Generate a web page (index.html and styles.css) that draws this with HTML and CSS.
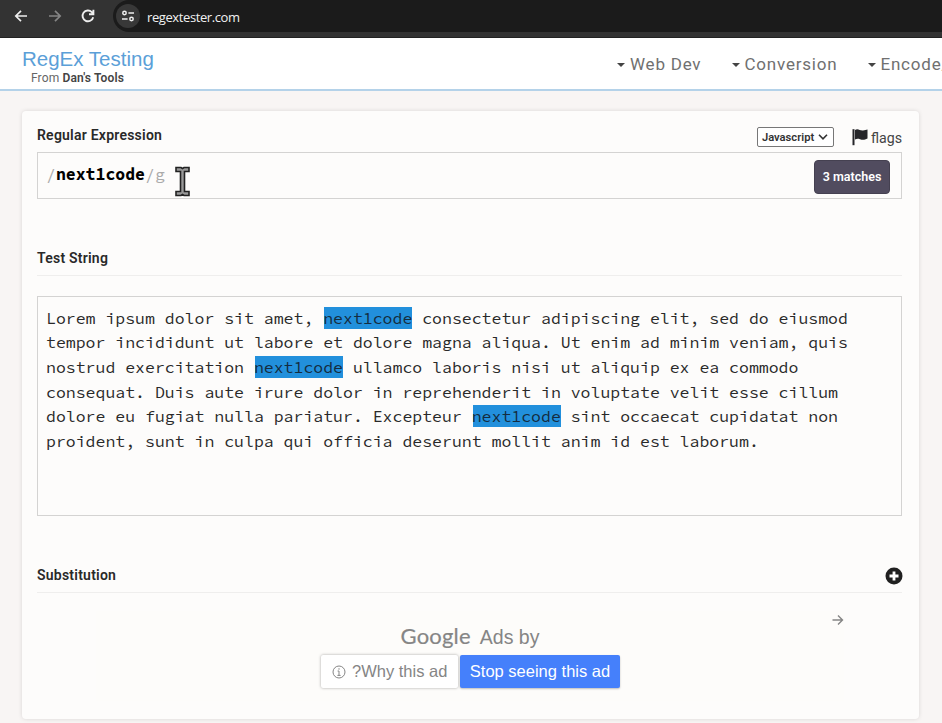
FILE: index.html
```html
<!DOCTYPE html>
<html lang="en">
<head>
<meta charset="utf-8">
<title>RegEx Testing</title>
<link rel="stylesheet" href="styles.css">
</head>
<body>
<div class="browser">
  <svg class="nav-icon" viewBox="0 0 14 14"><path d="M13 7H2M7 1.8 1.8 7 7 12.2"/></svg>
  <svg class="nav-icon dim" viewBox="0 0 14 14"><path d="M1 7h11M7 1.8 12.2 7 7 12.2"/></svg>
  <svg class="nav-icon reload" viewBox="0 0 14 14"><path d="M12.2 8.2A5.4 5.4 0 1 1 10.8 3.1L12 4.4M12.4.8v4.4H8"/></svg>
  <div class="omnibox">
    <span class="site-info"><svg viewBox="0 0 12 12"><path d="M6.4 3H12M0 9h5.6"/><circle cx="2.5" cy="3" r="1.7"/><circle cx="9.5" cy="9" r="1.7"/></svg></span>
    <span class="url">regextester.com</span>
  </div>
</div>
<header class="site-header">
  <div class="brand">
    <div class="brand-name">RegEx Testing</div>
    <div class="brand-from">From <b>Dan's Tools</b></div>
  </div>
  <nav class="menu">
    <a class="menu-item">Web Dev</a>
    <a class="menu-item conversion">Conversion</a>
    <a class="menu-item encode">Encode/</a>
  </nav>
</header>
<main class="card">
  <div class="expression-head">
    <h2>Regular Expression</h2>
    <div class="options">
      <div class="flavor">Javascript <svg viewBox="0 0 10 6"><path d="m1 .8 4 4 4-4"/></svg></div>
      <div class="flags"><svg viewBox="0 0 16 18"><path d="M.5 1.2h2v16h-2z"/><path d="M3 2c3-2 5 1 8 .5 2-.2 3-.6 4.500-1v9c-3 1.500-5 1.500-7.500.7-2-.7-3.500-.5-5 .4z"/></svg>flags</div>
    </div>
  </div>
  <div class="expression">
    <div class="pattern"><i>/</i><b>next1code</b><i>/g</i></div>
    <svg class="ibeam" viewBox="0 0 15 31"><path d="M1 1.500h5l1.500 1 1.500-1h5v4H9.500v20H14v4H9l-1.500-1-1.500 1H1v-4h4.500v-20H1z"/></svg>
    <div class="matches">3 matches</div>
  </div>
  <div class="section-head test-head"><h2>Test String</h2></div>
  <div class="test-string">Lorem ipsum dolor sit amet, <mark>next1code</mark> consectetur adipiscing elit, sed do eiusmod
tempor incididunt ut labore et dolore magna aliqua. Ut enim ad minim veniam, quis
nostrud exercitation <mark>next1code</mark> ullamco laboris nisi ut aliquip ex ea commodo
consequat. Duis aute irure dolor in reprehenderit in voluptate velit esse cillum
dolore eu fugiat nulla pariatur. Excepteur <mark>next1code</mark> sint occaecat cupidatat non
proident, sunt in culpa qui officia deserunt mollit anim id est laborum.</div>
  <div class="section-head sub-head"><h2>Substitution</h2><svg class="plus" viewBox="0 0 18 18"><circle cx="9" cy="9" r="8.500"/><path d="M9 4.500v9M4.500 9h9"/></svg></div>
  <div class="ad">
    <svg class="ad-arrow" viewBox="0 0 12 12"><path d="M.5 6h10M6 1.500 10.500 6 6 10.500"/></svg>
    <div class="ad-by"><span class="google">Google</span><span>Ads by</span></div>
    <div class="ad-buttons">
      <div class="why"><svg viewBox="0 0 14 14"><circle cx="7" cy="7" r="6"/><path d="M5.600 6H7v4.300M5.400 10.400h3.200M7 3.200v1.500"/></svg>?Why this ad</div>
      <div class="stop">Stop seeing this ad</div>
    </div>
  </div>
</main>
</body>
</html>
```
FILE: styles.css
```css
* { box-sizing: border-box; }
body { margin: 0; height: 723px; overflow: hidden; background: #f8f5f4; font-family: Roboto, sans-serif; color: #222; }
svg { display: block; flex: none; fill: none; stroke: currentColor; }
h2 { margin: 0; font-size: 14px; line-height: 18px; font-weight: 600; letter-spacing: .23px; color: #292929; }

.browser { height: 38px; background: #333; border-bottom: 1px solid #222; display: flex; color: #eee; padding-left: 14px; }
.nav-icon { width: 14px; height: 14px; margin: 9px 20px 0 0; stroke-width: 1.7; }
.nav-icon.dim { color: #858585; margin-right: 19px; }
.nav-icon.reload { margin-right: 18px; stroke-width: 1.9; }
.omnibox { flex: 1; height: 32px; background: #1b1b1b; border-radius: 16px 0 0 16px; display: flex; align-items: center; padding-left: 3px; }
.site-info { width: 24px; height: 24px; border-radius: 50%; background: #383838; display: grid; place-items: center; }
.site-info svg { width: 12px; height: 12px; stroke-width: 1.5; }
.url { margin: 2px 0 0 7px; font: 13px/18px "Open Sans", sans-serif; letter-spacing: -.4px; color: #f1f1f1; }

.site-header { height: 53px; background: #fff; border-bottom: 2px solid #b4d2e9; display: flex; overflow: hidden; }
.brand { width: 595px; flex: none; padding: 9px 0 0 22px; }
.brand-name { font: 20.5px/24px "Liberation Sans", sans-serif; color: #5b9fd8; }
.brand-from { margin: 2px 0 0 9px; font-size: 12px; line-height: 11px; letter-spacing: .13px; color: #666; }
.brand-from b { font-weight: 600; color: #444; }
.menu { display: flex; padding: 16px 0 0 22px; }
.menu-item { flex: none; display: flex; font-size: 17px; line-height: 20px; letter-spacing: .78px; color: #707070; width: 114.500px; white-space: nowrap; }
.menu-item.conversion { width: 136px; }
.menu-item.encode { width: 75px; }
.menu-item::before { content: ""; margin: 9px 5px 0 0; align-self: flex-start; border: 4px solid transparent; border-top-color: #444; border-bottom: 0; }

.card { width: 897px; height: 608px; margin: 20px 0 0 22px; padding: 14px 17px 0 15px; background: #fdfcfb; border-radius: 4px; box-shadow: 0 0 4px rgba(0,0,0,.13); }
.expression-head { display: flex; justify-content: space-between; height: 27px; }
.expression-head h2 { margin-top: 1px; }
.options { display: flex; gap: 18px; }
.flavor { margin-top: 2px; width: 77px; height: 20px; border: 1px solid #777; border-radius: 2px; background: #fff; display: flex; align-items: center; justify-content: space-between; padding: 0 5px 0 4px; font-size: 11.200px; font-weight: 600; color: #333; }
.flavor svg { width: 10px; height: 6px; stroke-width: 1.6; }
.flags { display: flex; gap: 3px; font-size: 14.200px; line-height: 27px; color: #444; }
.flags svg { width: 16px; height: 18px; margin-top: 3px; fill: #252529; stroke: none; }
.expression { height: 47px; border: 1px solid #d4d3d2; display: flex; align-items: flex-start; padding: 0 11px 0 8px; }
.pattern, .test-string { font-family: "Source Code Pro", "Noto Sans Mono CJK SC", "DejaVu Sans Mono", monospace; font-size: 16.500px; }
.pattern { width: 129px; line-height: 44px; white-space: nowrap; color: #aaa; }
.pattern i { font-style: normal; }
.pattern b { color: #000; }
.ibeam { width: 15px; height: 31px; margin-top: 13px; fill: #999; stroke: #222; stroke-width: 1.6; }
.matches { margin: 7px 0 0 auto; width: 76px; height: 34px; border-radius: 4px; background: #514c5f; border: 1px solid #454151; color: #fff; font-size: 12.500px; font-weight: 600; line-height: 32px; text-align: center; }
.section-head { display: flex; justify-content: space-between; border-bottom: 1px solid #efeeed; }
.test-head { margin-top: 50px; height: 27px; }
.test-string { margin-top: 20px; height: 220px; border: 1px solid #d4d3d2; padding: 9.600px 0 0 8px; line-height: 24.700px; white-space: pre; color: #292929; }
mark { display: inline-block; height: 22px; line-height: 23px; background: linear-gradient(90deg, transparent 1px, #2290dc 1px); color: #142c40; }
.sub-head { margin-top: 49px; height: 28px; }
.sub-head h2 { margin-top: 1px; }
.plus { width: 18px; height: 18px; margin: 2px -1px 0 0; stroke: #fff; stroke-width: 2.800; }
.plus circle { fill: #202020; stroke: none; }

.ad { width: 748px; height: 90px; margin: 18px 0 0 59px; background: #fdfcfa; display: flex; flex-direction: column; align-items: center; font-family: "Liberation Sans", sans-serif; }
.ad-arrow { width: 12px; height: 12px; align-self: flex-end; margin: 3px 0 0 0; color: #858585; stroke-width: 1.400; }
.ad-by { display: flex; gap: 9px; height: 29px; line-height: 22px; font-size: 19.500px; color: #858585; }
.google { font-family: Lato, sans-serif; font-size: 22px; line-height: 19px; letter-spacing: .2px; -webkit-text-stroke: .2px #858585; }
.ad-buttons { display: flex; gap: 2px; padding-left: 1px; font-size: 16.500px; line-height: 32px; white-space: nowrap; }
.why { width: 137px; height: 33px; display: flex; gap: 6px; padding-left: 11px; background: #fff; color: #858585; border-radius: 2px; box-shadow: 0 0 3px rgba(0,0,0,.35); }
.why svg { width: 14px; height: 14px; margin-top: 10px; }
.stop { width: 160px; height: 33px; text-align: center; background: #4580fb; color: #fff; border-radius: 2px; box-shadow: 0 1px 2px rgba(0,0,0,.25); }
```
